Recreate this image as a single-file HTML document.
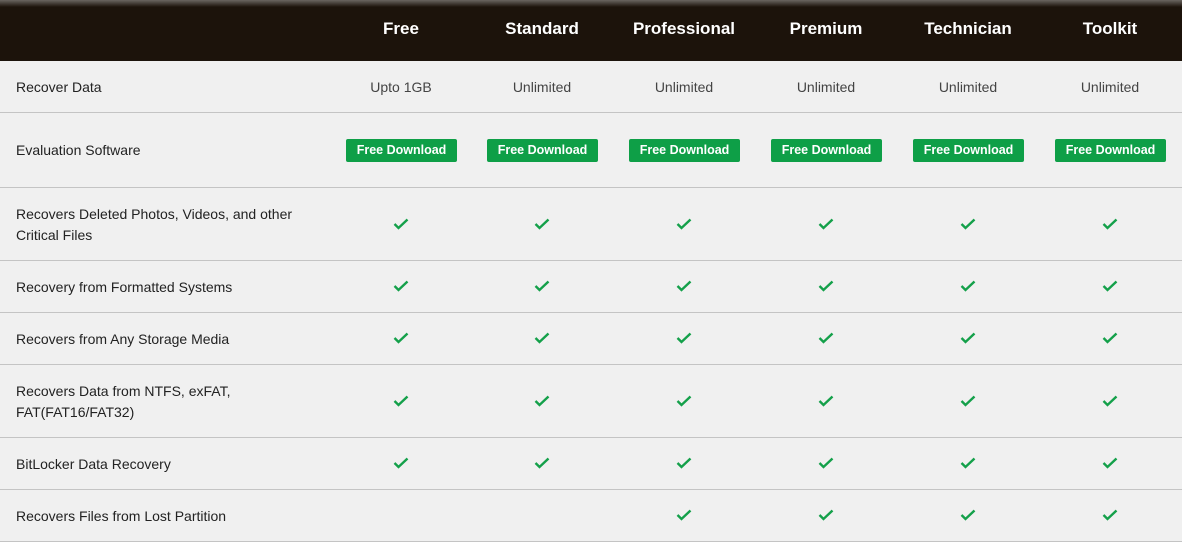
<!DOCTYPE html>
<html><head><style>
body{margin:0;width:1182px;height:542px;overflow:hidden;background:#f0f0f0;font-family:"Liberation Sans","DejaVu Sans",sans-serif;}
.hd{position:absolute;left:0;top:0;width:1182px;height:61px;background:linear-gradient(#6a6560 0px,#1c130b 7px,#1c130b 100%);}
.hd div{position:absolute;top:19px;width:142px;text-align:center;color:#fff;font-weight:bold;font-size:17px;}
.row{position:absolute;left:0;width:1182px;border-bottom:1px solid #c4c4c4;box-sizing:border-box;}
.lab{position:absolute;left:16px;font-size:14px;color:#222;line-height:21px;}
.c{position:absolute;width:142px;text-align:center;font-size:14px;color:#444;}
.btn{position:absolute;width:111px;height:23px;background:#0e9f47;color:#fff;font-weight:bold;font-size:12.5px;line-height:23px;text-align:center;border-radius:2px;}
svg{position:absolute;}
</style></head><body>
<div class="hd">
<div style="left:330px">Free</div><div style="left:471px">Standard</div><div style="left:613px">Professional</div><div style="left:755px">Premium</div><div style="left:897px">Technician</div><div style="left:1039px">Toolkit</div>
</div>
<div id="rows"></div>
<script>
var cx=[401,542,684,826,968,1110];
var rows=[
[61,113,"Recover Data","t"],
[113,188,"Evaluation Software","b"],
[188,261,"Recovers Deleted Photos, Videos, and other<br>Critical Files","k",6],
[261,313,"Recovery from Formatted Systems","k",6],
[313,365,"Recovers from Any Storage Media","k",6],
[365,438,"Recovers Data from NTFS, exFAT,<br>FAT(FAT16/FAT32)","k",6],
[438,490,"BitLocker Data Recovery","k",6],
[490,542,"Recovers Files from Lost Partition","k",4]];
var h="";
rows.forEach(function(r){
 var t=r[0],b=r[1],m=(t+b)/2-1;
 var lines=r[2].indexOf("<br>")>0?2:1;
 h+='<div class="row" style="top:'+t+'px;height:'+(b-t)+'px"></div>';
 h+='<div class="lab" style="top:'+(m-lines*10.5+1)+'px">'+r[2]+'</div>';
 cx.forEach(function(x,i){
  if(r[3]=="t")h+='<div class="c" style="left:'+(x-71)+'px;top:'+(m-7)+'px">'+(i?"Unlimited":"Upto 1GB")+'</div>';
  if(r[3]=="b")h+='<div class="btn" style="left:'+(x-55)+'px;top:'+(m-11)+'px">Free Download</div>';
  if(r[3]=="k"&&i>=6-r[4])h+='<svg width="16" height="12" style="left:'+(x-8)+'px;top:'+(m-6)+'px"><path d="M1.5 6 L5.5 10 L14.5 1.5" stroke="#14a04a" stroke-width="2.4" fill="none"/></svg>';
 });
});
document.getElementById("rows").innerHTML=h;
</script>
</body></html>
